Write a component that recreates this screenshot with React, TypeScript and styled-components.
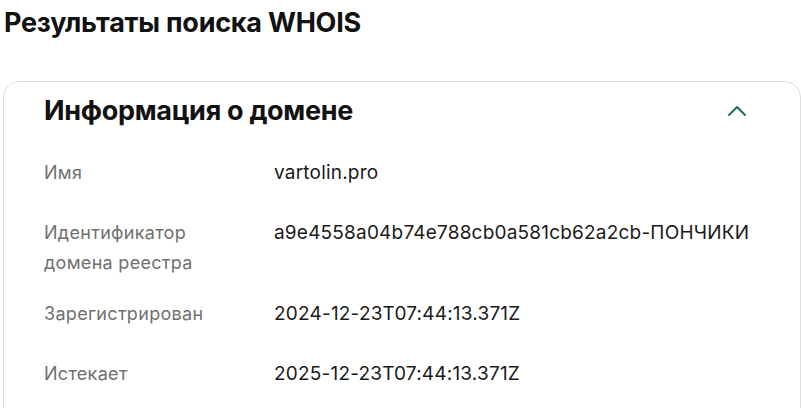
import React from "react";
import styled, { createGlobalStyle } from "styled-components";
import { ChevronUp } from "lucide-react";

const GlobalStyle = createGlobalStyle`
  html, body {
    margin: 0;
    padding: 0;
    background: #ffffff;
  }
  body {
    font-family: Inter, "Noto Sans", sans-serif;
    color: #1a1a1a;
  }
`;

const Page = styled.div`
  padding: 5px 0 0 3px;
`;

const PageTitle = styled.h1`
  margin: 0 0 40px 1px;
  font-size: 27px;
  line-height: 36px;
  font-weight: 700;
  color: #111111;
  letter-spacing: -0.25px;
`;

const Card = styled.section`
  border: 1px solid #dedede;
  border-radius: 16px;
  padding: 11px 0 0 40px;
  min-height: 400px;
`;

const CardHeader = styled.div`
  display: flex;
  align-items: center;
  justify-content: space-between;
  padding-right: 47px;
`;

const CardTitle = styled.h2`
  margin: 0;
  font-size: 27px;
  line-height: 36px;
  font-weight: 700;
  color: #111111;
  letter-spacing: -0.3px;
`;

const ToggleButton = styled.button`
  display: flex;
  align-items: center;
  justify-content: center;
  width: 32px;
  height: 32px;
  padding: 0;
  border: none;
  background: transparent;
  color: #1b6f69;
  cursor: pointer;
`;

const InfoList = styled.dl`
  display: grid;
  grid-template-columns: 230px 1fr;
  row-gap: 21px;
  margin: 29px 0 0;
`;

const Label = styled.dt`
  min-height: 39px;
  max-width: 170px;
  font-size: 18px;
  line-height: 30px;
  letter-spacing: 0.3px;
  color: #707070;
`;

const Value = styled.dd`
  margin: 0;
  font-size: 19px;
  line-height: 30px;
  letter-spacing: 0.2px;
  color: #1a1a1a;
`;

const rows = [
  { label: "Имя", value: "vartolin.pro" },
  {
    label: "Идентификатор домена реестра",
    value: "a9e4558a04b74e788cb0a581cb62a2cb-ПОНЧИКИ",
  },
  { label: "Зарегистрирован", value: "2024-12-23T07:44:13.371Z" },
  { label: "Истекает", value: "2025-12-23T07:44:13.371Z" },
];

export default function App() {
  return (
    <>
      <GlobalStyle />
      <Page>
        <PageTitle>Результаты поиска WHOIS</PageTitle>
        <Card>
          <CardHeader>
            <CardTitle>Информация о домене</CardTitle>
            <ToggleButton aria-label="Свернуть">
              <ChevronUp size={32} strokeWidth={1.5} />
            </ToggleButton>
          </CardHeader>
          <InfoList>
            {rows.map((row) => (
              <React.Fragment key={row.label}>
                <Label>{row.label}</Label>
                <Value>{row.value}</Value>
              </React.Fragment>
            ))}
          </InfoList>
        </Card>
      </Page>
    </>
  );
}
